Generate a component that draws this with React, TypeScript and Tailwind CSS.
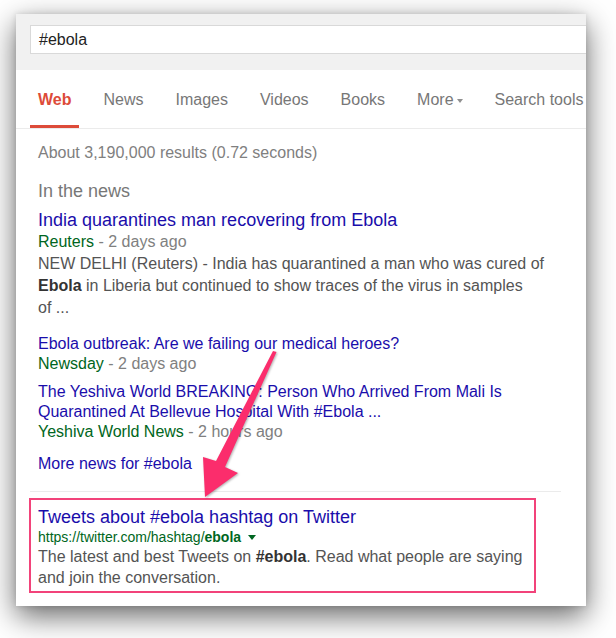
export default function App() {
  const tabs = ['News', 'Images', 'Videos', 'Books'];

  return (
    <div
      className="relative w-[616px] h-[638px] bg-white pl-4 pt-[14px] overflow-hidden"
      style={{ fontFamily: '"Liberation Sans", Arial, sans-serif' }}
    >
      <div className="w-[570px] h-[592px] bg-white overflow-hidden shadow-[0_10px_28px_rgba(0,0,0,0.6),0_0_6px_rgba(0,0,0,0.12)]">
        {/* search header */}
        <div className="h-[56px] bg-[#f1f1f1] pt-[11px] pl-[14px]">
          <div className="w-[600px] h-[29px] border border-[#d9d9d9] bg-white pl-2 flex items-center text-[16px] text-[#222]">
            #ebola
          </div>
        </div>

        {/* tabs */}
        <div className="flex h-[59px] pl-[14px] border-b border-[#ebebeb] whitespace-nowrap text-[16px] leading-[18px]">
          <div className="px-2 pt-[21px] border-b-[3px] border-[#dd4b39] font-bold text-[#dd4b39]">Web</div>
          {tabs.map((t) => (
            <div key={t} className="ml-4 px-2 pt-[21px] text-[#777]">
              {t}
            </div>
          ))}
          <div className="ml-4 px-2 pt-[21px] text-[#777] flex items-start">
            More
            <span className="ml-[3px] mt-[8px] w-0 h-0 border-l-[3px] border-r-[3px] border-t-[4px] border-l-transparent border-r-transparent border-t-[#909090]" />
          </div>
          <div className="ml-4 px-2 pt-[21px] text-[#777]">Search tools</div>
        </div>

        {/* results */}
        <div className="whitespace-nowrap">
          <div className="pl-[22px] mt-[14px] text-[16px] leading-[20px] text-[#808080]">
            About 3,190,000 results (0.72 seconds)
          </div>

          <div className="pl-[22px] mt-[17px] text-[18px] leading-[22px] text-[#777]">In the news</div>

          <div className="pl-[22px] mt-[7px]">
            <div className="text-[18px] leading-[22px] text-[#1a0dab]">India quarantines man recovering from Ebola</div>
            <div className="text-[16px] leading-[22px]">
              <span className="text-[#006621]">Reuters</span>
              <span className="text-[#808080]"> - 2 days ago</span>
            </div>
            <div className="text-[16px] leading-[22px] text-[#545454]">
              NEW DELHI (Reuters) - India has quarantined a man who was cured of
              <br />
              <b className="text-[#333]">Ebola</b> in Liberia but continued to show traces of the virus in samples
              <br />
              of ...
            </div>
          </div>

          <div className="pl-[22px] mt-[15px] text-[16px] leading-[20px]">
            <div className="text-[#1a0dab]">Ebola outbreak: Are we failing our medical heroes?</div>
            <div>
              <span className="text-[#006621]">Newsday</span>
              <span className="text-[#808080]"> - 2 days ago</span>
            </div>
          </div>

          <div className="pl-[22px] mt-2 text-[16px] leading-[20px]">
            <div className="text-[#1a0dab]">
              The Yeshiva World BREAKING: Person Who Arrived From Mali Is
              <br />
              Quarantined At Bellevue Hospital With #Ebola ...
            </div>
            <div>
              <span className="text-[#006621]">Yeshiva World News</span>
              <span className="text-[#808080]"> - 2 hours ago</span>
            </div>
          </div>

          <div className="pl-[22px] mt-3 text-[16px] leading-[20px] text-[#1a0dab]">More news for #ebola</div>

          <div className="ml-[14px] w-[531px] mt-[17px] border-t border-[#ebebeb]" />

          <div className="ml-[13px] mt-[6px] w-[507px] border-2 border-[#f2437a] pl-[7px] pt-[6px] pb-[3px]">
            <div className="text-[18px] leading-[22px] text-[#1a0dab]">Tweets about #ebola hashtag on Twitter</div>
            <div className="flex items-center text-[14px] leading-[18px] text-[#006621]">
              https://twitter.com/hashtag/<b>ebola</b>
              <span className="ml-[7px] w-0 h-0 border-l-[4px] border-r-[4px] border-t-[5px] border-l-transparent border-r-transparent border-t-[#006621]" />
            </div>
            <div className="text-[16px] leading-[21px] text-[#545454]">
              The latest and best Tweets on <b className="text-[#333]">#ebola</b>. Read what people are saying
              <br />
              and join the conversation.
            </div>
          </div>
        </div>
      </div>

      {/* annotation arrow */}
      <svg
        className="absolute left-0 top-0 pointer-events-none drop-shadow-[1px_1px_1px_rgba(0,0,0,0.3)]"
        width="616"
        height="638"
        viewBox="0 0 616 638"
      >
        <polygon points="273,351 276.5,352 225,467 238,473 205,497 203,457 216,461" fill="#fb2d6c" />
      </svg>
    </div>
  );
}
